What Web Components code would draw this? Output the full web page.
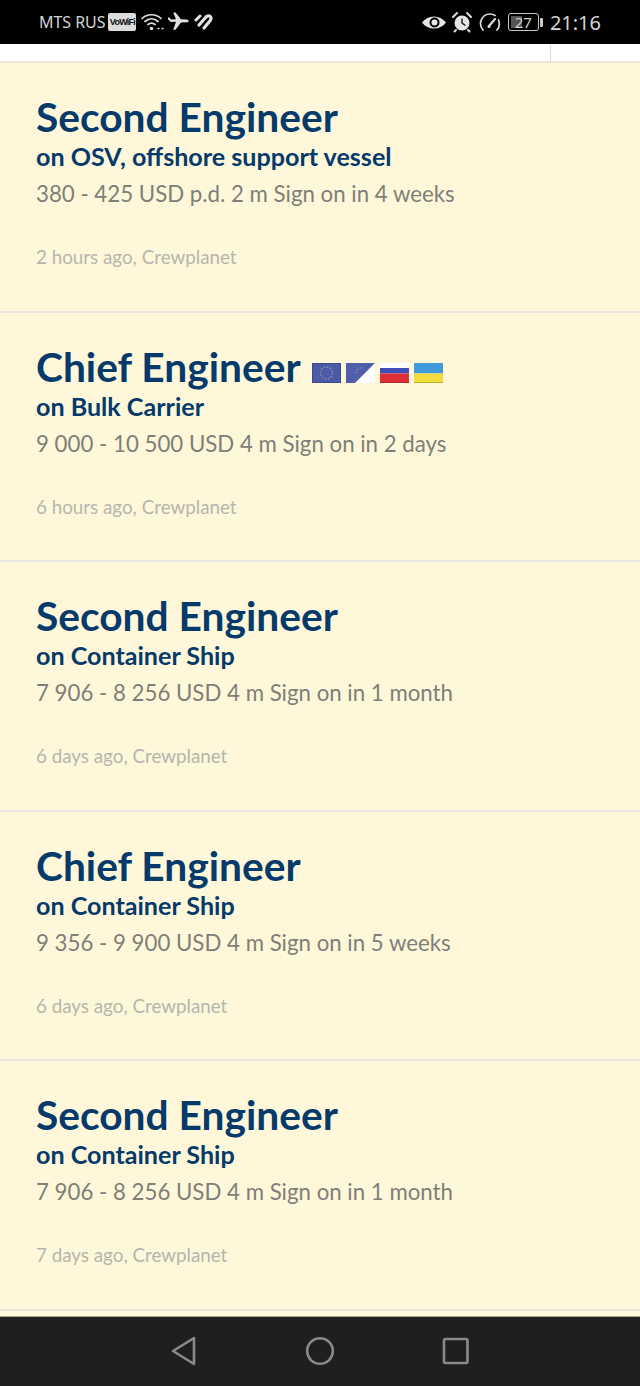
<!DOCTYPE html>
<html><head><meta charset="utf-8"><title>Jobs</title>
<style>
html,body{margin:0;padding:0;height:1386px;overflow:hidden;background:#fef7d9}
body{display:flex;flex-direction:column;font-family:"Lato","Noto Sans",sans-serif}
</style></head><body>
<status-bar></status-bar>
<top-strip></top-strip>
<job-list>
<job-card><span slot="title">Second Engineer</span><span slot="vessel">on OSV, offshore support vessel</span><span slot="detail">380 - 425 USD p.d. 2 m Sign on in 4 weeks</span><span slot="meta">2 hours ago, Crewplanet</span></job-card>
<job-card><span slot="title">Chief Engineer</span><job-flags slot="flags"></job-flags><span slot="vessel">on Bulk Carrier</span><span slot="detail">9 000 - 10 500 USD 4 m Sign on in 2 days</span><span slot="meta">6 hours ago, Crewplanet</span></job-card>
<job-card><span slot="title">Second Engineer</span><span slot="vessel">on Container Ship</span><span slot="detail">7 906 - 8 256 USD 4 m Sign on in 1 month</span><span slot="meta">6 days ago, Crewplanet</span></job-card>
<job-card><span slot="title">Chief Engineer</span><span slot="vessel">on Container Ship</span><span slot="detail">9 356 - 9 900 USD 4 m Sign on in 5 weeks</span><span slot="meta">6 days ago, Crewplanet</span></job-card>
<job-card><span slot="title">Second Engineer</span><span slot="vessel">on Container Ship</span><span slot="detail">7 906 - 8 256 USD 4 m Sign on in 1 month</span><span slot="meta">7 days ago, Crewplanet</span></job-card>
</job-list>
<nav-bar></nav-bar>
<script>
function def(name,html){customElements.define(name,class extends HTMLElement{constructor(){super();this.attachShadow({mode:"open"}).innerHTML=html}})}
def("status-bar",`<style>
:host{display:flex;flex:none;height:44px;background:#000;color:#d4d4d4;align-items:center;padding:0 39px 0 39px;box-sizing:border-box;font-family:"Noto Sans",sans-serif;justify-content:space-between}
.g{display:flex;align-items:center}
.c{font-size:16px;letter-spacing:-.05px;white-space:nowrap}
.v{font:700 9px/18px "Liberation Sans",sans-serif;background:#dcdcdc;color:#111;border-radius:2px;height:18px;margin:0 5px 0 3px;width:28px;text-align:center;letter-spacing:-.75px;white-space:nowrap}
svg{display:block}
.t{font-size:20px;margin-left:6px}
.b{font-size:15px;line-height:1;color:#d0d0d0;width:31px;height:18px;border:1.5px solid #c8c8c8;border-radius:3px;box-sizing:border-box;display:flex;align-items:center;justify-content:center;background:linear-gradient(90deg,#555 45%,transparent 45%) 2px 2px/calc(100% - 4px) calc(100% - 4px) no-repeat}
</style>
<div class="g"><span class="c">MTS RUS</span><span class="v">VoWiFi</span>
<svg width="24" height="20" viewBox="0 0 24 20" fill="none" stroke="#ddd" stroke-width="1.7" stroke-linecap="round"><path d="M1 6.500C6 1.500 15 1.500 20 6.500M4 9.500C8 6 13 6 17 9.500M7 12.500C9.500 10.500 11.500 10.500 14 12.500"/><circle cx="10.500" cy="16.500" r="1.800" fill="#ddd" stroke="none"/><path d="M17 16.500h1M21 16.500h1" stroke-width="1.300"/></svg>
<svg width="21" height="20" viewBox="0 0 21 20" fill="#e2e2e2" style="margin-left:3px"><path d="M0 7.500l3 2.500 5-.3-2.800 8h2.300L13 10.500l5.500-.2c2.800-.2 2.800-2.600 0-2.800L13 7.300 7.500 .5H5.200L8 7.200l-5 .2-1.800-2H0z"/></svg>
<svg width="20" height="18" viewBox="0 0 20 18" fill="none" stroke="#e2e2e2" stroke-linecap="round" style="margin-left:5px"><path d="M2 7l4-4" stroke-width="3"/><path d="M5 12l7-8c2-2 5-1 5 1.500 0 1-.5 1.500-1 2.200L10 15" stroke-width="3.200"/></svg></div>
<div class="g">
<svg width="24" height="17" viewBox="0 0 24 17" style="margin-right:5px"><path d="M0 8.500C6 .5 18 .5 24 8.500 18 16.500 6 16.500 0 8.500z" fill="#e6e6e6"/><circle cx="12.500" cy="8.500" r="5" fill="#000"/><circle cx="12.500" cy="8.500" r="3" fill="#e6e6e6"/></svg>
<svg width="22" height="22" viewBox="0 0 22 22" style="margin-right:5px"><circle cx="11" cy="12" r="7.500" fill="#e4e4e4"/><path d="M11 7.500V12l3.500 2.500" stroke="#222" stroke-width="1.500" fill="none"/><path d="M2 6l4-4M20 6l-4-4M5 19l-1.500 1.500M17 19l1.500 1.500" stroke="#ddd" stroke-width="2" stroke-linecap="round"/></svg>
<svg width="23" height="20" viewBox="0 0 23 20" fill="none" stroke="#ddd" stroke-width="1.700" stroke-linecap="round" style="margin-right:7px"><path d="M5 18C-.5 11.500 4 2 12 2c2 0 3.500.5 5 1.500M20.500 8c1.500 4 .8 7.500-1.500 10"/><path d="M11 14l6-7" stroke-width="2.200"/><circle cx="11" cy="14.500" r="1.500" fill="#ddd" stroke="none"/></svg>
<span class="b">27</span><svg width="4" height="9" style="margin-left:1px"><rect width="3" height="9" rx="1" fill="#ccc"/></svg>
<span class="t">21:16</span></div>`);
def("top-strip",`<style>:host{display:flex;flex:none;height:17px;background:#fff;justify-content:flex-end}
i{display:block;width:90px;border-left:1px solid #ddd;box-sizing:border-box}</style><i></i>`);
def("job-list",`<style>:host{display:block;flex:1;min-height:0;overflow:hidden;border-top:2px solid #e9e7dd;box-sizing:border-box}</style><slot></slot>`);
def("job-card",`<style>
:host{display:block;height:249.6px;box-sizing:border-box;padding:31px 36px 0;background:#fef7d9;border-bottom:2px solid #e9e7dd;color:#053a6a}
.h{display:flex;align-items:center;gap:11px;height:46px;font-size:40.7px;font-weight:700;line-height:46px;white-space:nowrap}
.s{font-size:25.1px;font-weight:700;line-height:30px;margin-top:1px;white-space:nowrap}
.d{font-size:22.25px;line-height:30px;color:#7f7f78;margin-top:8px;white-space:nowrap}
.m{font-size:18.8px;line-height:26px;color:#b6b6ad;margin-top:35px;white-space:nowrap}
</style>
<div class="h"><slot name="title"></slot><slot name="flags"></slot></div>
<div class="s"><slot name="vessel"></slot></div>
<div class="d"><slot name="detail"></slot></div>
<div class="m"><slot name="meta"></slot></div>`);
def("job-flags",`<style>:host{display:flex;gap:5px;align-items:flex-end;margin-top:12px}svg{display:block}</style>
<svg width="29" height="20" viewBox="0 0 29 20"><rect x=".5" y=".5" width="28" height="19" fill="#4a5aa6" stroke="#3c4a8c"/><circle cx="14.500" cy="10" r="6" fill="none" stroke="#8d90a0" stroke-width="1.500" stroke-dasharray="1.500 1.600"/></svg>
<svg width="29" height="20" viewBox="0 0 29 20"><rect width="29" height="20" fill="#fff"/><path d="M0 0H29L9 20H0z" fill="#4f5ea8"/><path d="M10 10a5.500 5.500 0 0 1 7-5" fill="none" stroke="#8d90a0" stroke-width="1.500" stroke-dasharray="1.500 1.600"/></svg>
<svg width="29" height="20" viewBox="0 0 29 20"><rect width="29" height="5" fill="#fff"/><rect y="5" width="29" height="5.500" fill="#3e50b5"/><rect y="10.500" width="29" height="9.500" fill="#dc2f36"/><rect y="19" width="29" height="1" fill="#a8262c"/></svg>
<svg width="29" height="20" viewBox="0 0 29 20"><rect width="29" height="10.500" fill="#3f9bdc"/><rect y="10.500" width="29" height="9.500" fill="#f2dc3c"/><rect y="19" width="29" height="1" fill="#c2b030"/></svg>`);
def("nav-bar",`<style>:host{display:flex;flex:none;height:70px;background:#1f1f1f;border-top:1px solid #a8a593;box-sizing:border-box;align-items:center;padding:0 0 1px 170px}svg{display:block}</style>
<svg width="300" height="30" viewBox="0 0 300 30" fill="none" stroke="#8a8a8a" stroke-width="2.600" stroke-linejoin="round"><path d="M24 2V28L3 15z"/><circle cx="150" cy="15" r="12.800"/><rect x="274" y="3" width="23.500" height="24" rx="1.500"/></svg>`);
</script>
</body></html>
